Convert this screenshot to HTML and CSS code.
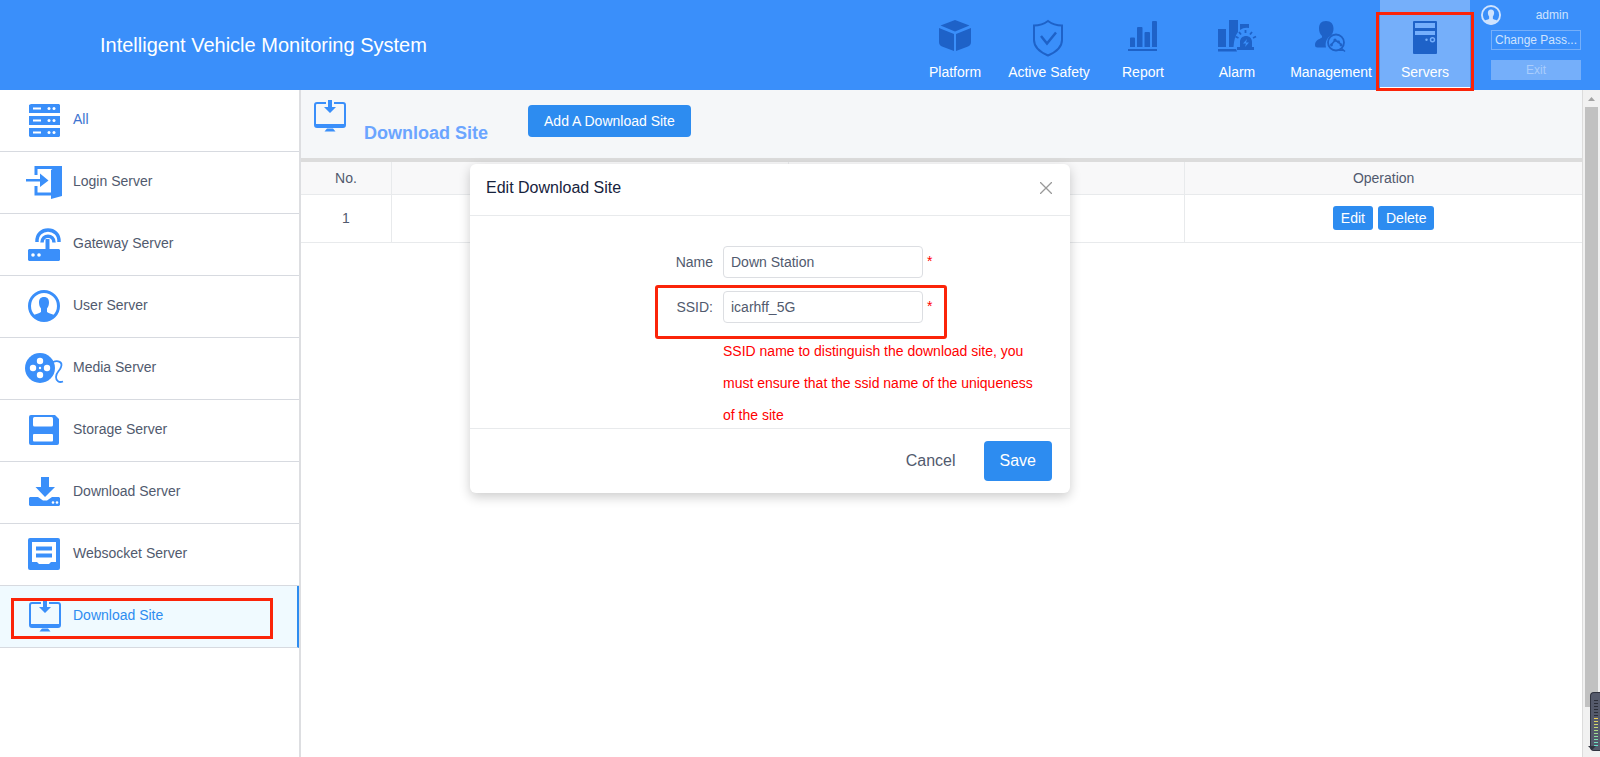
FILE: index.html
```html
<!DOCTYPE html>
<html lang="en">
<head>
<meta charset="utf-8">
<title>Intelligent Vehicle Monitoring System</title>
<link rel="stylesheet" href="styles.css">
</head>
<body>
<svg class="defs" aria-hidden="true">
  <symbol id="i-site" viewBox="0 0 32 32">
    <path d="M12 3H3a2 2 0 0 0-2 2v20a2 2 0 0 0 2 2h26a2 2 0 0 0 2-2V5a2 2 0 0 0-2-2h-9" fill="none" stroke="currentColor" stroke-width="2"/>
    <path d="M1 24h30v3H1zM14 0h4v7h4l-6 6-6-6h4zM13 28.500h6l2.500 3h-11z" fill="currentColor"/>
  </symbol>
  <symbol id="i-user" viewBox="0 0 32 32">
    <circle cx="16" cy="16" r="14.500" fill="none" stroke="currentColor" stroke-width="3"/>
    <path d="M16 7c3.500 0 5 2.200 5 5.500 0 2.500-.8 4.500-2 6V22c2 1.800 5 1.800 8.500 3.500A15 15 0 0 1 16 31 15 15 0 0 1 4.500 25.500C8 23.800 11 23.800 13 22v-3.500c-1.200-1.500-2-3.500-2-6C11 9.200 12.500 7 16 7z" fill="currentColor"/>
  </symbol>
</svg>

<header class="topbar">
  <h1 class="brand">Intelligent Vehicle Monitoring System</h1>
  <nav class="nav" aria-label="Main">
    <a class="nav-item" href="#platform">
      <svg class="nav-icon" viewBox="0 0 36 36"><path d="M18 0l14.500 5.500L18 11.500 3.500 5.500zM2 8l15 6v17L5 26.500Q2 25 2 22zM34 8l-15 6v17l12-4.500q3-1.500 3-4.500z" fill="currentColor"/></svg>
      <span>Platform</span></a>
    <a class="nav-item" href="#safety">
      <svg class="nav-icon" viewBox="1 0 36 36"><path d="M18 1c4 3 8.500 4.500 14 4.500V20c0 8-7 12.500-14 15.500C11 32.500 4 28 4 20V5.500C9.500 5.500 14 4 18 1z" fill="none" stroke="currentColor" stroke-width="2"/><path d="M11 16l6 7.500 9-11" fill="none" stroke="currentColor" stroke-width="2.500"/></svg>
      <span>Active Safety</span></a>
    <a class="nav-item" href="#report">
      <svg class="nav-icon" viewBox="0 0 36 36"><path d="M5 18.500q0-1 1-1h3q1 0 1 1V27H5zM12 8q0-1 1-1h3.500q1 0 1 1v19H12zM19.500 13q0-1 1-1H24q1 0 1 1v14h-5.500zM27 2q0-1 1-1h3q1 0 1 1v25h-5zM3 29h29v2H3z" fill="currentColor"/></svg>
      <span>Report</span></a>
    <a class="nav-item" href="#alarm">
      <svg class="nav-icon" viewBox="0 0 36 36"><path d="M-1 9h8v18h-8zM10 0h9v12q-4 5-4.500 15H10zM21 4h9v4q-5-1-9 2zM-1 29h18l1 2.500H-1z" fill="currentColor"/><path d="M21 27v-5c0-8 12-8 12 0v5h2v3H18v-3z" fill="currentColor"/><path d="M19.500 18l-3-1.500M22 14.500L20 12M26.500 13v-3M31 14.500l2-2.500M34 18l3-1.500" stroke="currentColor" stroke-width="1.800"/><path d="M28 19l-4 4.500h3L26 27l4-4.500h-3z" fill="#3a8ffa"/></svg>
      <span>Alarm</span></a>
    <a class="nav-item" href="#management">
      <svg class="nav-icon" viewBox="0 0 36 36"><path d="M13 1c5 0 7.500 3 7.500 7.500 0 3.500-1 5.500-3 7.500-4 2-5.500 6.500-4.500 11.500H4.500Q2 27.500 2 25c0-4.500 3.500-5.500 7-7.500V16c-2-2-3-4-3-7.500C6 4 8 1 13 1z" fill="currentColor"/><circle cx="23" cy="22.500" r="8" fill="none" stroke="currentColor" stroke-width="1.800"/><path d="M28.500 28.500l3.500 3M18 25l4-4.500 3.500 1.500 3 3M26 30.200h5" fill="none" stroke="currentColor" stroke-width="1.600"/><circle cx="22" cy="20" r="1.600" fill="currentColor"/><circle cx="25.500" cy="22" r="1.400" fill="currentColor"/><circle cx="18.500" cy="25" r="1.400" fill="currentColor"/><circle cx="28" cy="25" r="1.400" fill="currentColor"/></svg>
      <span>Management</span></a>
    <a class="nav-item nav-item-active" href="#servers" aria-current="page">
      <svg class="nav-icon" viewBox="0 0 36 36"><path d="M7 1h22q1 0 1 1v31q0 1-1 1H7q-1 0-1-1V2q0-1 1-1z" fill="currentColor"/><path d="M8 3h20v5H8zM8 11h20v4H8z" fill="#75affc"/><circle cx="25.500" cy="19.800" r="2" fill="none" stroke="#75affc" stroke-width="1.400"/><circle cx="19.500" cy="19.800" r="1.200" fill="#75affc"/></svg>
      <span>Servers</span>
      <i class="mark mark-nav"></i></a>
  </nav>
  <div class="account">
    <svg class="avatar"><use href="#i-user"/></svg>
    <span class="account-name">admin</span>
    <button class="account-btn" type="button" title="Change Password">Change Pass...</button>
    <button class="account-btn account-exit" type="button">Exit</button>
  </div>
</header>

<div class="layout">
  <nav class="sidebar" aria-label="Servers">
    <a class="side-item side-item-first" href="#all">
      <svg class="side-icon" viewBox="0 0 36 36"><g fill="currentColor"><path d="M4 1h28l1 1v8H2V2zM2 13h31v9H2zM2 25h31v8l-1 1H3l-1-1z"/></g><path d="M6 4.500h8v2H6zM6 16.500h8v2H6zM6 28.500h8v2H6z" fill="#fff"/><g fill="#fff"><circle cx="22" cy="5.500" r="1.500"/><circle cx="27" cy="5.500" r="1.500"/><circle cx="22" cy="17.500" r="1.500"/><circle cx="27" cy="17.500" r="1.500"/><circle cx="22" cy="29.500" r="1.500"/><circle cx="27" cy="29.500" r="1.500"/></g></svg>
      <span>All</span></a>
    <a class="side-item" href="#login">
      <svg class="side-icon" viewBox="0 0 36 36"><path d="M9 10V2.500h23M9 21v8h16" fill="none" stroke="currentColor" stroke-width="3"/><path d="M24 5l6-4h5v30l-11 3zM-1 14h14V8.500l8.500 7L13 22v-5.500H-1z" fill="currentColor"/></svg>
      <span>Login Server</span></a>
    <a class="side-item" href="#gateway">
      <svg class="side-icon" viewBox="0 0 36 36"><path d="M2 22h30l1 1v10l-1 1H2l-1-1V23z" fill="currentColor"/><g fill="none" stroke="currentColor" stroke-width="3.500"><path d="M20.500 12v11" stroke-width="4"/><path d="M10 15C9-1 33-1 32 15M15 15.500c0-8.500 12-8.500 12 0"/></g><circle cx="6" cy="28" r="1.800" fill="#fff"/><circle cx="12" cy="28" r="1.800" fill="#fff"/></svg>
      <span>Gateway Server</span></a>
    <a class="side-item" href="#user">
      <svg class="side-icon" viewBox="-1 -1 36 36"><use href="#i-user" width="32" height="32"/></svg>
      <span>User Server</span></a>
    <a class="side-item" href="#media">
      <svg class="side-icon" viewBox="0 0 36 36"><circle cx="13" cy="17" r="15" fill="currentColor"/><g fill="#fff"><circle cx="13" cy="10" r="3.200"/><circle cx="6" cy="17" r="3.200"/><circle cx="20" cy="17" r="3.200"/><circle cx="13" cy="24" r="3.200"/><circle cx="13" cy="17" r="1.200"/></g><path d="M26 11c5-2 10 0 8 5-1 4-5 5-5 10 0 4 3 6 7 4.500" fill="none" stroke="currentColor" stroke-width="1.800"/></svg>
      <span>Media Server</span></a>
    <a class="side-item" href="#storage">
      <svg class="side-icon" viewBox="0 0 36 36"><path d="M4 2h24l4 4v24q0 2-2 2H4q-2 0-2-2V4q0-2 2-2z" fill="currentColor"/><rect x="6" y="4" width="20" height="9.500" rx="1.500" fill="#fff"/><rect x="6" y="21" width="20" height="7.500" rx="1" fill="#fff"/></svg>
      <span>Storage Server</span></a>
    <a class="side-item" href="#download">
      <svg class="side-icon" viewBox="0 0 36 36"><path d="M14 2h8v10h6L18 22 8.500 12H14zM3 22h8l5 3.500h4L25 22h7l1 1v7l-1 1H3l-1-1v-7z" fill="currentColor"/><circle cx="26" cy="27.500" r="1.300" fill="#fff"/><circle cx="30" cy="27.500" r="1.300" fill="#fff"/></svg>
      <span>Download Server</span></a>
    <a class="side-item" href="#websocket">
      <svg class="side-icon" viewBox="0 0 36 36"><rect x="1" y="1" width="32" height="32" rx="2" fill="currentColor"/><path d="M5 5h24v20h-5l-2 2H12l-2-2H5z" fill="#fff"/><path d="M9 9.500h16v4H9zM9 16.500h16v4H9z" fill="currentColor"/></svg>
      <span>Websocket Server</span></a>
    <a class="side-item side-item-active" href="#site" aria-current="page">
      <svg class="side-icon" viewBox="-2 -1 36 36"><use href="#i-site" width="32" height="32"/></svg>
      <span>Download Site</span>
      <i class="mark mark-side"></i></a>
  </nav>

  <main class="content">
    <div class="toolbar">
      <svg class="toolbar-icon"><use href="#i-site"/></svg>
      <h2 class="toolbar-title">Download Site</h2>
      <button class="btn" type="button">Add A Download Site</button>
    </div>
    <table class="grid">
      <thead><tr><th class="col-no">No.</th><th></th><th></th><th>Operation</th></tr></thead>
      <tbody><tr><td>1</td><td></td><td></td>
        <td><div class="ops"><button class="btn btn-small" type="button">Edit</button><button class="btn btn-small" type="button">Delete</button></div></td></tr></tbody>
    </table>
  </main>

  <div class="scroll" aria-hidden="true">
    <div class="scroll-arrow"></div>
    <div class="scroll-thumb"></div>
    <div class="meter"><div class="meter-idle"></div><div class="meter-live"></div></div>
  </div>
</div>

<form class="modal" role="dialog" aria-labelledby="dlg-title">
  <div class="modal-head">
    <h3 class="modal-title" id="dlg-title">Edit Download Site</h3>
    <button class="close" type="button" aria-label="Close"><svg viewBox="0 0 12 12"><path d="M0 0l12 12M12 0L0 12" stroke="currentColor" stroke-width="1.300"/></svg></button>
  </div>
  <div class="modal-body">
    <div class="field">
      <label for="site-name">Name</label>
      <input id="site-name" type="text" value="Down Station">
      <span class="required">*</span>
    </div>
    <div class="field">
      <label for="site-ssid">SSID:</label>
      <input id="site-ssid" type="text" value="icarhff_5G">
      <span class="required">*</span>
      <i class="mark mark-field"></i>
    </div>
    <p class="hint">SSID name to distinguish the download site, you must ensure that the ssid name of the uniqueness of the site</p>
  </div>
  <div class="modal-foot">
    <button class="btn-text" type="button">Cancel</button>
    <button class="btn btn-large" type="submit">Save</button>
  </div>
</form>
</body>
</html>
```
FILE: styles.css
```css
* { box-sizing: border-box; }

body {
  margin: 0;
  height: 100vh;
  display: flex;
  flex-direction: column;
  overflow: hidden;
  font: 14px/20px "Liberation Sans", Arial, sans-serif;
  color: #515a6e;
  background: #fff;
}

h1, h2, h3, p { margin: 0; }
a { color: inherit; text-decoration: none; }
button, input { font: inherit; margin: 0; }
button { cursor: pointer; }
.defs { position: absolute; width: 0; height: 0; }

/* Top bar */
.topbar {
  flex: none;
  height: 90px;
  display: flex;
  background: #3a8ffa;
  color: #fff;
}
.brand {
  flex: 1;
  padding-left: 100px;
  font-size: 20px;
  line-height: 90px;
  font-weight: 400;
  white-space: nowrap;
}
.nav { display: flex; gap: 4px; }
.nav-item {
  position: relative;
  width: 90px;
  height: 88px;
  padding-top: 20px;
  display: flex;
  flex-direction: column;
  align-items: center;
  gap: 6px;
  white-space: nowrap;
}
.nav-icon { width: 36px; height: 36px; color: #1e62c8; overflow: visible; }
.nav-item-active { background: #75affa; border-bottom: 1px solid #fff; }

.account {
  width: 119px;
  margin-left: 11px;
  padding: 5px 19px 0 0;
  display: grid;
  grid-template-columns: 10px 10px 1fr;
  row-gap: 5px;
  align-content: start;
  font-size: 12px;
  color: #cfe3fe;
}
.avatar { grid-column: 1 / 3; width: 20px; height: 20px; }
.account-name { padding-left: 22px; text-align: center; }
.account-btn {
  grid-column: 2 / 4;
  height: 20px;
  padding: 0;
  border: 1px solid #75affa;
  background: none;
  color: #cfe3fe;
  line-height: 18px;
  white-space: nowrap;
}
.account-exit { margin-top: 5px; background: #75affa; color: #a9cdfd; }

/* Red outlines that call attention to a control */
.mark {
  position: absolute;
  border: 3px solid #fb2409;
  pointer-events: none;
}
.mark-nav { inset: 12px -4px -4px; z-index: 2; }
.mark-side { inset: 12px 24px 8px 11px; }
.mark-field { inset: -6px 123px -16px 185px; border-radius: 3px; }

/* Body layout */
.layout { flex: 1; min-height: 0; display: flex; }
.sidebar {
  flex: none;
  width: 301px;
  border-right: 2px solid #dddee1;
}
.side-item {
  position: relative;
  height: 62px;
  padding: 0 0 3px 27px;
  display: flex;
  align-items: center;
  gap: 10px;
  border-bottom: 1px solid #d7dae0;
}
.side-icon { width: 36px; height: 36px; margin-top: 4px; color: #3a8ffa; overflow: visible; }
.side-item-first { color: #3d73d0; }
.side-item-active {
  background: #f0faff;
  color: #2d8cf0;
  border-right: 2px solid #2d8cf0;
}

.content { flex: 1; min-width: 0; border-right: 1px solid #dcdcdc; }
.toolbar {
  height: 72px;
  padding: 10px 14px 0 13px;
  display: flex;
  align-items: flex-start;
  background: #f5f7f9;
  border-bottom: 4px solid #dcdcdc;
}
.toolbar-icon { width: 32px; height: 32px; color: #3a8ffa; }
.toolbar-title {
  margin: 23px 40px 0 18px;
  font-size: 18px;
  line-height: 20px;
  color: #6ba5ff;
}
.toolbar .btn { margin-top: 5px; }

.btn {
  height: 32px;
  padding: 0 16px;
  border: 0;
  border-radius: 4px;
  background: #2d8cf0;
  color: #fff;
}
.btn-small { height: 24px; padding: 0 8px; border-radius: 3px; }
.btn-large { height: 40px; padding: 0 16px; font-size: 16px; }

.grid {
  width: 100%;
  table-layout: fixed;
  border-collapse: separate;
  border-spacing: 0;
  text-align: center;
}
.grid th, .grid td {
  padding: 0;
  border-right: 1px solid #e8eaec;
  border-bottom: 1px solid #e8eaec;
}
.grid th:last-child, .grid td:last-child { border-right: 0; }
.grid th { height: 33px; background: #f8f8f9; font-weight: 400; }
.grid td { height: 48px; padding-bottom: 2px; }
.grid .col-no { width: 91px; }
.ops { display: flex; justify-content: center; gap: 5px; }

/* Scroll track */
.scroll {
  position: relative;
  flex: none;
  width: 17px;
  padding: 0 2px;
  background: #f1f1f1;
}
.scroll-arrow {
  height: 17px;
  background: #a3a3a3;
  clip-path: polygon(50% 7px, 10px 11px, 3px 11px);
}
.scroll-thumb { height: calc(100% - 67px); background: #c1c1c1; }
.meter {
  position: absolute;
  right: 0;
  bottom: 6px;
  width: 10px;
  height: 59px;
  padding: 7px 2px 0 3px;
  border: 1px solid #30333f;
  border-right: 0;
  border-radius: 4px 0 0 4px;
  background: #555a6b;
}
.meter::after {
  content: "";
  position: absolute;
  left: -3px;
  bottom: 0;
  border: 4px solid transparent;
  border-top-color: #30333f;
  border-bottom: 0;
}
.meter-idle {
  height: 18px;
  background: repeating-linear-gradient(#2b2e38 0 1px, #555a6b 1px 3px);
}
.meter-live {
  height: 28px;
  background:
    repeating-linear-gradient(transparent 0 1px, #555a6b 1px 3px),
    linear-gradient(#f4cf50, #a8dc8a, #5fe0d0);
}

/* Dialog */
.modal {
  position: absolute;
  top: 164px;
  left: calc(50% - 330px);
  width: 600px;
  border-radius: 6px;
  background: #fff;
  box-shadow: 0 4px 12px rgba(0, 0, 0, 0.2);
}
.modal-head {
  height: 52px;
  padding: 0 18px 4px 16px;
  display: flex;
  align-items: center;
  justify-content: space-between;
  border-bottom: 1px solid #e8eaec;
}
.modal-title { font-size: 16px; font-weight: 400; color: #17233d; }
.close {
  width: 12px;
  height: 12px;
  padding: 0;
  border: 0;
  background: none;
  color: #999;
}
.close svg { display: block; }
.modal-body {
  padding-top: 30px;
  display: flex;
  flex-direction: column;
  gap: 13px;
}
.field { position: relative; display: flex; align-items: center; }
.field label { width: 243px; text-align: right; }
.field input {
  width: 200px;
  height: 32px;
  margin: 0 4px 0 10px;
  padding: 0 7px;
  border: 1px solid #dcdee2;
  border-radius: 4px;
  background: #fff;
  color: #515a6e;
}
.required { padding-bottom: 3px; color: #f00; }
.hint {
  width: 320px;
  margin: -1px 0 -3px 253px;
  line-height: 32px;
  color: #f00;
}
.modal-foot {
  padding: 12px 18px;
  display: flex;
  justify-content: flex-end;
  align-items: center;
  gap: 28px;
  border-top: 1px solid #e8eaec;
}
.btn-text {
  padding: 0;
  border: 0;
  background: none;
  font-size: 16px;
  color: #515a6e;
}
```
